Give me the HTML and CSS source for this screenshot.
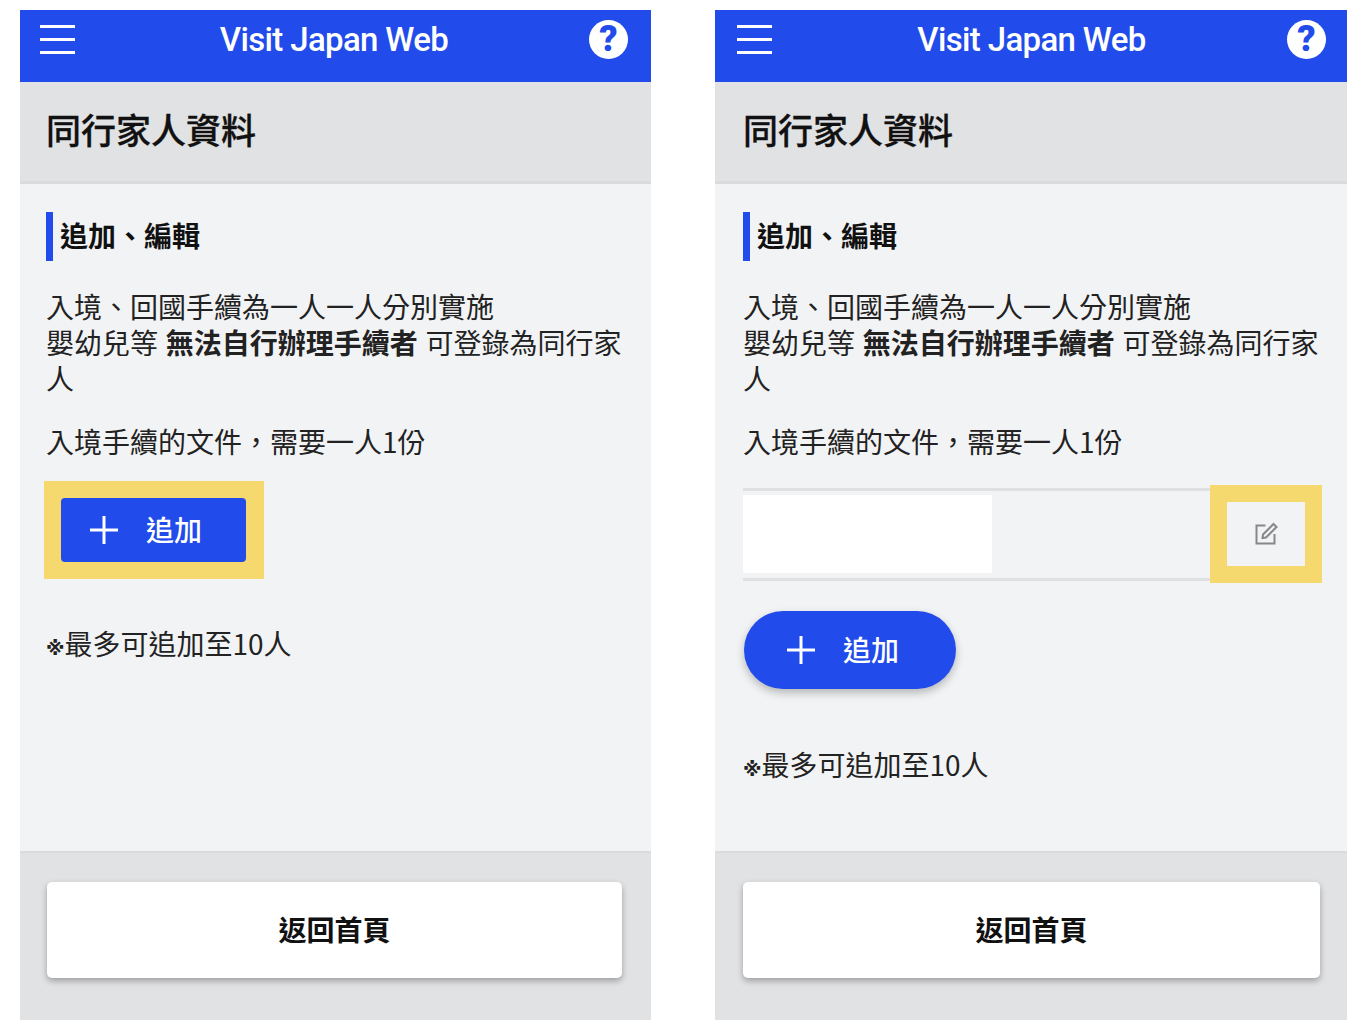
FILE: index.html
```html
<!DOCTYPE html>
<html lang="zh-Hant">
  <head>
    <meta charset="utf-8">
    <title>Visit Japan Web</title>
    <link rel="stylesheet" href="styles.css">
  </head>
  <body>
    <!-- before adding a family member -->
    <div class="phone phone-first">
      <div class="app-bar">
        <div class="menu-icon"><span></span><span></span><span></span></div>
        <div class="app-title">Visit Japan Web</div>
        <div class="help-icon">?</div>
      </div>
      <h1 class="page-title">同行家人資料</h1>
      <div class="content">
        <h2 class="section-title">追加、編輯</h2>
        <p class="text">入境、回國手續為一人一人分別實施<br>嬰幼兒等 <b>無法自行辦理手續者</b> 可登錄為同行家人</p>
        <p class="text text-gap">入境手續的文件，需要一人1份</p>
        <div class="highlight">
          <div class="add-button square">
            <svg class="plus" viewBox="0 0 28 28"><path d="M14 0V28M0 14H28"/></svg>
            <span>追加</span>
          </div>
        </div>
        <p class="text note"><span class="mark">※</span>最多可追加至10人</p>
      </div>
      <div class="footer">
        <div class="home-button">返回首頁</div>
      </div>
    </div>

    <!-- after adding a family member -->
    <div class="phone phone-second">
      <div class="app-bar">
        <div class="menu-icon"><span></span><span></span><span></span></div>
        <div class="app-title">Visit Japan Web</div>
        <div class="help-icon">?</div>
      </div>
      <h1 class="page-title">同行家人資料</h1>
      <div class="content">
        <h2 class="section-title">追加、編輯</h2>
        <p class="text">入境、回國手續為一人一人分別實施<br>嬰幼兒等 <b>無法自行辦理手續者</b> 可登錄為同行家人</p>
        <p class="text text-gap">入境手續的文件，需要一人1份</p>
        <div class="member-row">
          <div class="member-name"></div>
          <div class="edit-highlight">
            <svg class="edit-icon" viewBox="0 0 24 24">
              <path d="M11.5 3.5H2.5V21.500H20.500V12"/>
              <path d="M9 12.500L19.500 2L22.500 5L12 15.500L8.500 16Z"/>
            </svg>
          </div>
        </div>
        <div class="add-button pill">
          <svg class="plus" viewBox="0 0 28 28"><path d="M14 0V28M0 14H28"/></svg>
          <span>追加</span>
        </div>
        <p class="text note note-after-pill"><span class="mark">※</span>最多可追加至10人</p>
      </div>
      <div class="footer">
        <div class="home-button">返回首頁</div>
      </div>
    </div>
  </body>
</html>
```

FILE: styles.css
```css
* {
  box-sizing: border-box;
}

html, body {
  height: 100%;
}

body {
  background: #fff;
  color: #222;
  display: grid;
  font-family: "Noto Sans CJK TC", "Noto Sans", sans-serif;
  gap: 64px;
  grid-template-columns: 631px 632px;
  margin: 0;
  padding: 10px 17px 6px 20px;
}

.phone {
  background: #f2f3f5;
  display: flex;
  flex-direction: column;
  min-width: 0;
}

/* the two screens are not cropped quite alike */
.phone-first {
  --bar-left: 20px;
  --bar-right: 23px;
  --inset-left: 26px;
  --inset-right: 29px;
}

.phone-second {
  --bar-left: 22px;
  --bar-right: 21px;
  --inset-left: 28px;
  --inset-right: 27px;
}

.app-bar {
  align-items: center;
  background: #214bea;
  display: flex;
  flex: none;
  height: 72px;
  justify-content: space-between;
  padding: 0 var(--bar-right) 13px var(--bar-left);
}

.menu-icon {
  display: flex;
  flex-direction: column;
  gap: 10px;
  width: 35px;
}

.menu-icon span {
  background: #fff;
  height: 3px;
}

.app-title {
  color: #fff;
  font-family: Roboto, sans-serif;
  font-size: 33px;
  font-weight: 500;
  letter-spacing: -0.65px;
  line-height: 40px;
  margin-left: 4px;
}

.help-icon {
  background: #fff;
  border-radius: 50%;
  color: #214bea;
  font-family: Roboto, sans-serif;
  font-size: 36px;
  font-weight: 900;
  height: 39px;
  line-height: 39px;
  text-align: center;
  width: 39px;
}

.page-title {
  -webkit-text-stroke: 0.3px #111;
  background: #e1e2e4;
  border-bottom: 3px solid #dadbdc;
  color: #111;
  flex: none;
  font-size: 35px;
  font-weight: 500;
  height: 102px;
  line-height: 93px;
  margin: 0;
  padding-left: var(--inset-left);
}

.content {
  flex: 1;
  padding: 28px var(--inset-right) 0 var(--inset-left);
}

.section-title {
  border-left: 7px solid #214bea;
  color: #111;
  font-size: 28px;
  font-weight: 700;
  height: 49px;
  line-height: 47px;
  margin: 0 0 27px;
  padding-left: 7px;
}

.text {
  font-size: 28px;
  line-height: 36px;
  margin: 0;
  word-spacing: 1.5px;
}

.text b {
  font-weight: 700;
}

.text-gap {
  margin-top: 27px;
}

.highlight {
  background: #f5d96f;
  margin: 22px 0 46px -2px;
  padding: 17px;
  width: 220px;
}

.add-button {
  align-items: center;
  background: #214bea;
  color: #fff;
  display: flex;
  font-size: 28px;
  font-weight: 500;
  gap: 28px;
}

.add-button span {
  margin-bottom: 2px;
}

.square {
  border-radius: 4px;
  height: 64px;
  padding-left: 29px;
  width: 185px;
}

.pill {
  border-radius: 39px;
  box-shadow: 0 4px 8px rgba(0, 0, 0, 0.25);
  gap: 28px;
  height: 78px;
  margin: 30px 0 0 1px;
  padding-left: 43px;
  width: 212px;
}

.plus {
  fill: none;
  height: 28px;
  stroke: #fff;
  stroke-width: 3;
  width: 28px;
}

.note .mark {
  font-family: "DejaVu Sans", sans-serif;
  font-size: 19px;
  font-weight: 700;
}

.note-after-pill {
  margin-top: 57px;
}

.member-row {
  align-items: center;
  border-bottom: 3px solid #dfe0e2;
  border-top: 3px solid #dfe0e2;
  display: flex;
  height: 93px;
  justify-content: space-between;
  margin-top: 29px;
  position: relative;
}

.member-name {
  background: #fff;
  height: 78px;
  margin-bottom: 2px;
  width: 249px;
}

/* sits over the row lines */
.edit-highlight {
  align-items: center;
  background: #f2f3f5;
  border: 17px solid #f5d96f;
  display: flex;
  height: 98px;
  justify-content: center;
  position: absolute;
  right: -2px;
  top: -6px;
  width: 112px;
}

.edit-icon {
  fill: none;
  height: 24px;
  stroke: #888;
  stroke-width: 2;
  width: 24px;
}

.footer {
  background: #e1e2e4;
  border-top: 2px solid #dadbdc;
  flex: none;
  height: 169px;
  padding: 29px var(--inset-right) 0 var(--inset-left);
}

.phone-first .footer {
  padding-left: 27px;
}

.home-button {
  background: #fff;
  border-radius: 5px;
  box-shadow: 0 3px 6px rgba(0, 0, 0, 0.3);
  color: #111;
  font-size: 28px;
  font-weight: 700;
  height: 96px;
  line-height: 94px;
  text-align: center;
}
```
